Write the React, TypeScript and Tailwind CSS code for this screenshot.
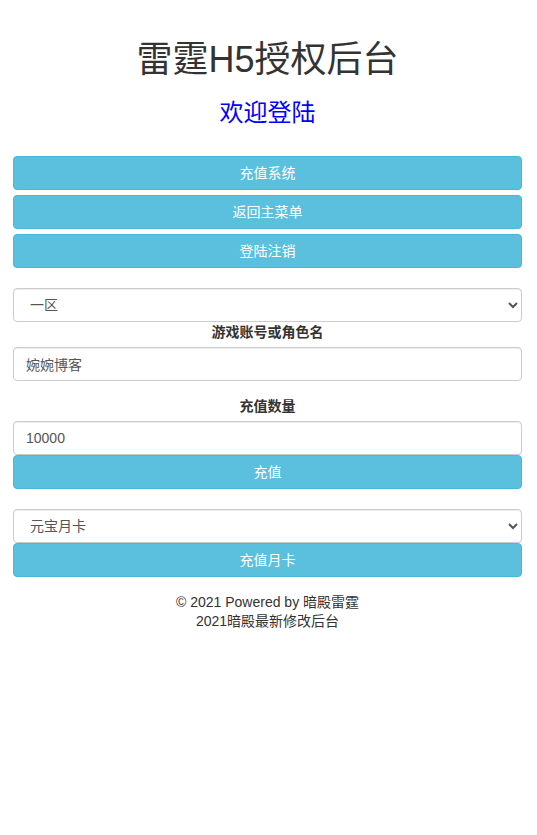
import { useState } from "react";

const font = "font-['Helvetica_Neue','Liberation_Sans','Noto_Sans_CJK_SC',sans-serif]";

function InfoButton({ children }: { children: React.ReactNode }) {
  return (
    <button
      type="button"
      className="block w-full h-[34px] rounded-[4px] border border-[#46b8da] bg-[#5bc0de] text-white text-[14px] leading-[20px]"
    >
      {children}
    </button>
  );
}

export default function App() {
  const [zone, setZone] = useState("1");
  const [account, setAccount] = useState("婉婉博客");
  const [amount, setAmount] = useState("10000");
  const [card, setCard] = useState("yuanbao");

  return (
    <div className={`min-h-[835px] bg-white text-[#333] text-[14px] ${font}`}>
      <div className="pl-[13px] pr-[15px] pt-[40px]">
        <h1 className="text-center text-[36px] leading-[40px] font-normal">雷霆H5授权后台</h1>
        <h3 className="mt-[20px] text-center text-[24px] leading-[26px] font-normal text-[#0000ff]">欢迎登陆</h3>

        {/* nav buttons */}
        <div className="mt-[30px] flex flex-col gap-[5px]">
          <InfoButton>充值系统</InfoButton>
          <InfoButton>返回主菜单</InfoButton>
          <InfoButton>登陆注销</InfoButton>
        </div>

        {/* recharge form */}
        <div className="mt-[20px]">
          <select
            value={zone}
            onChange={(e) => setZone(e.target.value)}
            className="block w-full h-[34px] rounded-[4px] border border-[#ccc] bg-white px-[12px] text-[14px] text-[#555] shadow-[inset_0_1px_1px_rgba(0,0,0,0.075)]"
          >
            <option value="1">一区</option>
            <option value="2">二区</option>
          </select>
          <label className="block text-center font-bold leading-[20px] mb-[5px]">游戏账号或角色名</label>
          <input
            value={account}
            onChange={(e) => setAccount(e.target.value)}
            className="block w-full h-[34px] rounded-[4px] border border-[#ccc] px-[12px] text-[14px] text-[#555] shadow-[inset_0_1px_1px_rgba(0,0,0,0.075)] outline-none"
          />
          <label className="block mt-[15px] text-center font-bold leading-[20px] mb-[5px]">充值数量</label>
          <input
            value={amount}
            onChange={(e) => setAmount(e.target.value)}
            className="block w-full h-[34px] rounded-[4px] border border-[#ccc] px-[12px] text-[14px] text-[#555] shadow-[inset_0_1px_1px_rgba(0,0,0,0.075)] outline-none"
          />
          <InfoButton>充值</InfoButton>
        </div>

        {/* monthly card */}
        <div className="mt-[20px]">
          <select
            value={card}
            onChange={(e) => setCard(e.target.value)}
            className="block w-full h-[34px] rounded-[4px] border border-[#ccc] bg-white px-[12px] text-[14px] text-[#555] shadow-[inset_0_1px_1px_rgba(0,0,0,0.075)]"
          >
            <option value="yuanbao">元宝月卡</option>
          </select>
          <InfoButton>充值月卡</InfoButton>
        </div>

        <div className="mt-[16px] text-center leading-[19px]">
          <p>© 2021 Powered by 暗殿雷霆</p>
          <p>2021暗殿最新修改后台</p>
        </div>
      </div>
    </div>
  );
}
